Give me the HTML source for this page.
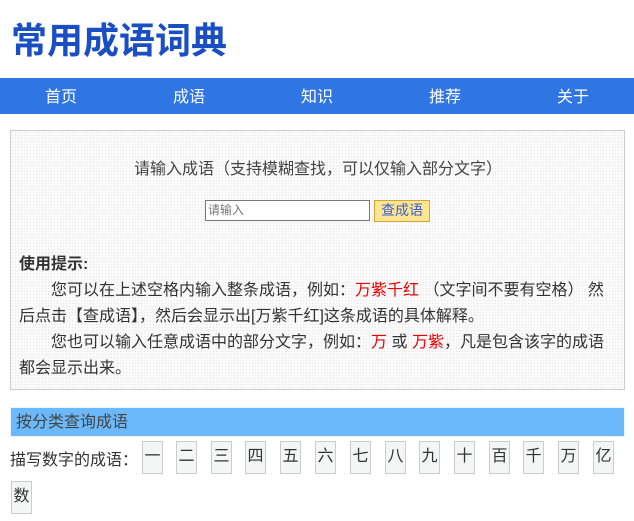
<!DOCTYPE html>
<html><head><meta charset="utf-8"><style>
body{margin:0;background:#fff;font-family:"Liberation Sans","Noto Sans CJK SC",sans-serif;width:634px;height:521px;overflow:hidden;position:relative;color:#333}
.a{position:absolute;white-space:nowrap}
h1{position:absolute;left:11px;top:12px;margin:0;font-size:36px;font-weight:bold;color:#1a4fc4;letter-spacing:0px}
.nav{position:absolute;left:0;top:78px;width:634px;height:36px;background:#2f76e3}
.nav span{position:absolute;top:5px;color:#fff;font-size:16px;transform:translateX(-50%)}
.box{position:absolute;left:10px;top:130px;width:613px;height:258px;border:1px solid #ccc;background-color:#fafafa;background-image:radial-gradient(#e6e6e6 0.6px,transparent 0.8px);background-size:3px 3px}
.p{position:absolute;left:19px;width:590px;font-size:16px;line-height:26px;color:#333}
.r{color:#e00}
.cat{position:absolute;left:10px;top:407px;width:615px;height:30px;background:#6bb9fb;border:1px solid #e8f4ff;box-sizing:border-box}
.n{position:absolute;top:441px;width:19px;height:31px;border:1px solid #ccc;background:#f4f6f6;font-size:16px;line-height:30px;text-align:center;color:#333}
</style></head><body>
<h1>常用成语词典</h1>
<div class="nav"><span style="left:61px">首页</span><span style="left:189px">成语</span><span style="left:317px">知识</span><span style="left:445px">推荐</span><span style="left:573px">关于</span></div>
<div class="box"></div>
<div class="a" style="left:134px;top:155px;font-size:16px;color:#444">请输入成语（支持模糊查找，可以仅输入部分文字）</div>
<div class="a" style="left:205px;top:200px;width:161px;height:19px;border:1px solid #777;background:#fff;font-size:12px;line-height:19px;color:#777;padding-left:2px;box-sizing:content-box">请输入</div>
<div class="a" style="left:374px;top:200px;width:54px;height:20px;border:1px solid #d4a53a;background:#ffe58f;font-size:14px;line-height:19px;text-align:center;color:#3a5fd0">查成语</div>
<div class="p" style="top:252px;font-weight:bold">使用提示:</div>
<div class="p" style="top:278px;text-indent:32px">您可以在上述空格内输入整条成语，例如：<span class="r">万紫千红</span> （文字间不要有空格） 然后点击【查成语】，然后会显示出[万紫千红]这条成语的具体解释。</div>
<div class="p" style="top:330px;text-indent:32px">您也可以输入任意成语中的部分文字，例如：<span class="r">万</span> 或 <span class="r">万紫</span>，凡是包含该字的成语都会显示出来。</div>
<div class="cat"></div>
<div class="a" style="left:16px;top:408px;font-size:16px;color:#444">按分类查询成语</div>
<div class="a" style="left:10px;top:446px;font-size:16px;color:#333">描写数字的成语：</div>
<div class="n" style="left:142px">一</div><div class="n" style="left:176px">二</div><div class="n" style="left:211px">三</div><div class="n" style="left:245px">四</div><div class="n" style="left:280px">五</div><div class="n" style="left:315px">六</div><div class="n" style="left:350px">七</div><div class="n" style="left:385px">八</div><div class="n" style="left:419px">九</div><div class="n" style="left:454px">十</div><div class="n" style="left:489px">百</div><div class="n" style="left:523px">千</div><div class="n" style="left:558px">万</div><div class="n" style="left:593px">亿</div>
<div class="n" style="left:11px;top:481px">数</div>
</body></html>
